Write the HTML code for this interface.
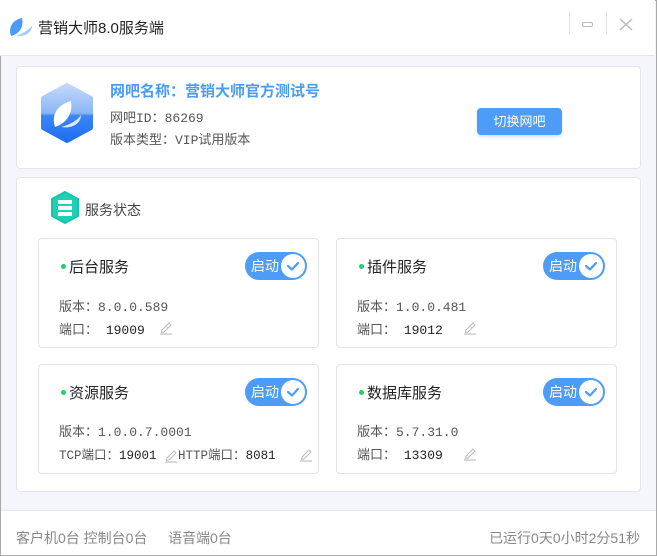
<!DOCTYPE html>
<html><head><meta charset="utf-8"><style>
*{margin:0;padding:0;box-sizing:border-box}
body{width:657px;height:556px;overflow:hidden;font-family:"Liberation Sans","Noto Sans CJK SC",sans-serif;background:#f5f6fc;position:relative}
.win{position:absolute;left:0;top:0;width:657px;height:556px;border:1px solid #a9a9a9;}
.title{position:absolute;left:0;top:0;width:655px;height:56px;background:#fff;border-bottom:1px solid #e6e6ee}
.abs{position:absolute}
.panel{position:absolute;background:#fff;border:1px solid #e4e5ea;border-radius:4px}
.card{position:absolute;width:281px;height:110px;background:#fff;border:1px solid #e3e4e8;border-radius:4px}
.card .dot{position:absolute;left:22px;top:25px;width:5px;height:5px;border-radius:50%;background:#19d46a}
.card .nm{position:absolute;left:30px;top:17px;font-size:15px;color:#222}
.card .l{position:absolute;left:20px;font-size:13px;color:#555;font-family:"Liberation Mono","Noto Sans CJK SC",monospace}
.card .v{color:#222}
.tg{position:absolute;left:206px;top:13px;width:62px;height:28px;border-radius:14px;background:#4d9cf8}
.tg span{position:absolute;left:6px;top:4px;color:#fff;font-size:14px}
.tg i{position:absolute;right:2px;top:2px;width:24px;height:24px;border-radius:50%;background:#fff}
.pen{display:inline-block;vertical-align:middle}
.foot{position:absolute;left:1px;top:510px;width:655px;height:45px;background:#fff;border-top:1px solid #e6e6ee;font-size:14px;color:#888}
</style></head><body>
<div class="win"></div>
<div class="title">
<svg class="abs" style="left:8px;top:16px" width="26" height="22" viewBox="0 0 26 22"><path d="M3 20C0 12 4 4 14 2C16 10 12 18 3 20Z" fill="#4c9cf6"/><path d="M8 20C14 18 20 14 24 10C24 16 18 21 8 20Z" fill="#a9cdfa"/></svg>
<div class="abs" style="left:38px;top:17px;font-size:15px;color:#222">营销大师8.0服务端</div>
<div class="abs" style="left:569px;top:12px;width:1px;height:22px;background:#ddd"></div>
<div class="abs" style="left:606px;top:12px;width:1px;height:22px;background:#ddd"></div>
<div class="abs" style="left:582px;top:22px;width:11px;height:5px;border:1px solid #bbb;border-radius:2px"></div>
<svg class="abs" style="left:619px;top:18px" width="14" height="13" viewBox="0 0 14 13"><path d="M1 1L13 12M13 1L1 12" stroke="#bbb" stroke-width="1.5"/></svg>
</div>
<div class="panel" style="left:16px;top:66px;width:625px;height:103px">
<svg class="abs" style="left:22px;top:16px" width="56" height="62" viewBox="0 0 56 62"><defs><linearGradient id="g" x1="0" y1="0" x2="0" y2="1"><stop offset="0" stop-color="#c2d8fb"/><stop offset=".5" stop-color="#8ab6f6"/><stop offset=".55" stop-color="#3b87f4"/><stop offset="1" stop-color="#1f6ef3"/></linearGradient></defs><path d="M28 2L52 15V45L28 58L4 45V15Z" fill="url(#g)" stroke="url(#g)" stroke-width="4" stroke-linejoin="round"/><path d="M16 44C12 32 18 22 32 18C34 30 28 40 16 44Z" fill="#fff"/><path d="M22 44C30 42 38 38 42 32C42 40 34 46 22 44Z" fill="#dbe9fd"/></svg>
<div class="abs" style="left:93px;top:13px;font-size:15px;color:#4a9bf5;font-weight:bold">网吧名称：营销大师官方测试号</div>
<div class="abs" style="left:93px;top:40px;font-size:13px;color:#555;font-family:'Liberation Mono','Noto Sans CJK SC',monospace">网吧ID：86269</div>
<div class="abs" style="left:93px;top:62px;font-size:13px;color:#555;font-family:'Liberation Mono','Noto Sans CJK SC',monospace">版本类型：VIP试用版本</div>
<div class="abs" style="left:460px;top:41px;width:85px;height:27px;background:#4c9cf8;border-radius:4px;color:#fff;font-size:13px;text-align:center;line-height:27px;box-shadow:0 2px 3px #cfe2fc">切换网吧</div>
</div>
<div class="panel" style="left:16px;top:177px;width:625px;height:315px">
<svg class="abs" style="left:33px;top:13px" width="30" height="33" viewBox="0 0 30 33"><path d="M15 1L28 8V25L15 32L2 25V8Z" fill="#1fd1b4" stroke="#14c4ac" stroke-width="2" stroke-linejoin="round"/><rect x="8" y="9" width="14" height="4" fill="#fff"/><rect x="8" y="15" width="14" height="4" fill="#fff"/><rect x="8" y="21" width="14" height="4" fill="#fff"/></svg>
<div class="abs" style="left:68px;top:22px;font-size:14px;color:#444">服务状态</div>
</div>
<svg width="0" height="0" style="position:absolute"><defs><g id="pen"><path d="M3 10L10 3L12 5L5 12L2.5 12.5Z" fill="none" stroke="#bbb" stroke-width="1"/><path d="M1 14H13" stroke="#ccc" stroke-width="1.5"/></g><g id="ck"><path d="M7 12L11 15.5L17 9" fill="none" stroke="#4d9cf8" stroke-width="2.2" stroke-linecap="round" stroke-linejoin="round"/></g></defs></svg>

<div class="card" style="left:38px;top:238px"><div class="dot"></div><div class="nm">后台服务</div>
<div class="tg"><span>启动</span><i><svg width="24" height="24"><use href="#ck"/></svg></i></div>
<div class="l" style="top:57px">版本：8.0.0.589</div>
<div class="l" style="top:80px">端口： <span class="v">19009</span></div>
<svg class="abs" style="left:120px;top:81px" width="14" height="15"><use href="#pen"/></svg></div>

<div class="card" style="left:336px;top:238px"><div class="dot"></div><div class="nm">插件服务</div>
<div class="tg"><span>启动</span><i><svg width="24" height="24"><use href="#ck"/></svg></i></div>
<div class="l" style="top:57px">版本：1.0.0.481</div>
<div class="l" style="top:80px">端口： <span class="v">19012</span></div>
<svg class="abs" style="left:126px;top:81px" width="14" height="15"><use href="#pen"/></svg></div>

<div class="card" style="left:38px;top:364px"><div class="dot"></div><div class="nm">资源服务</div>
<div class="tg"><span>启动</span><i><svg width="24" height="24"><use href="#ck"/></svg></i></div>
<div class="l" style="top:56px">版本：1.0.0.7.0001</div>
<div class="l" style="top:79px;font-size:12.5px">TCP端口：<span class="v">19001</span> <svg class="pen" width="14" height="15"><use href="#pen"/></svg>HTTP端口：<span class="v">8081</span></div>
<svg class="abs" style="left:260px;top:82px" width="14" height="15"><use href="#pen"/></svg></div>

<div class="card" style="left:336px;top:364px"><div class="dot"></div><div class="nm">数据库服务</div>
<div class="tg"><span>启动</span><i><svg width="24" height="24"><use href="#ck"/></svg></i></div>
<div class="l" style="top:56px">版本：5.7.31.0</div>
<div class="l" style="top:79px">端口： <span class="v">13309</span></div>
<svg class="abs" style="left:126px;top:81px" width="14" height="15"><use href="#pen"/></svg></div>

<div class="foot">
<div class="abs" style="left:15px;top:17px">客户机0台 控制台0台</div>
<div class="abs" style="left:167px;top:17px">语音端0台</div>
<div class="abs" style="right:16px;top:17px">已运行0天0小时2分51秒</div>
</div>
</body></html>
